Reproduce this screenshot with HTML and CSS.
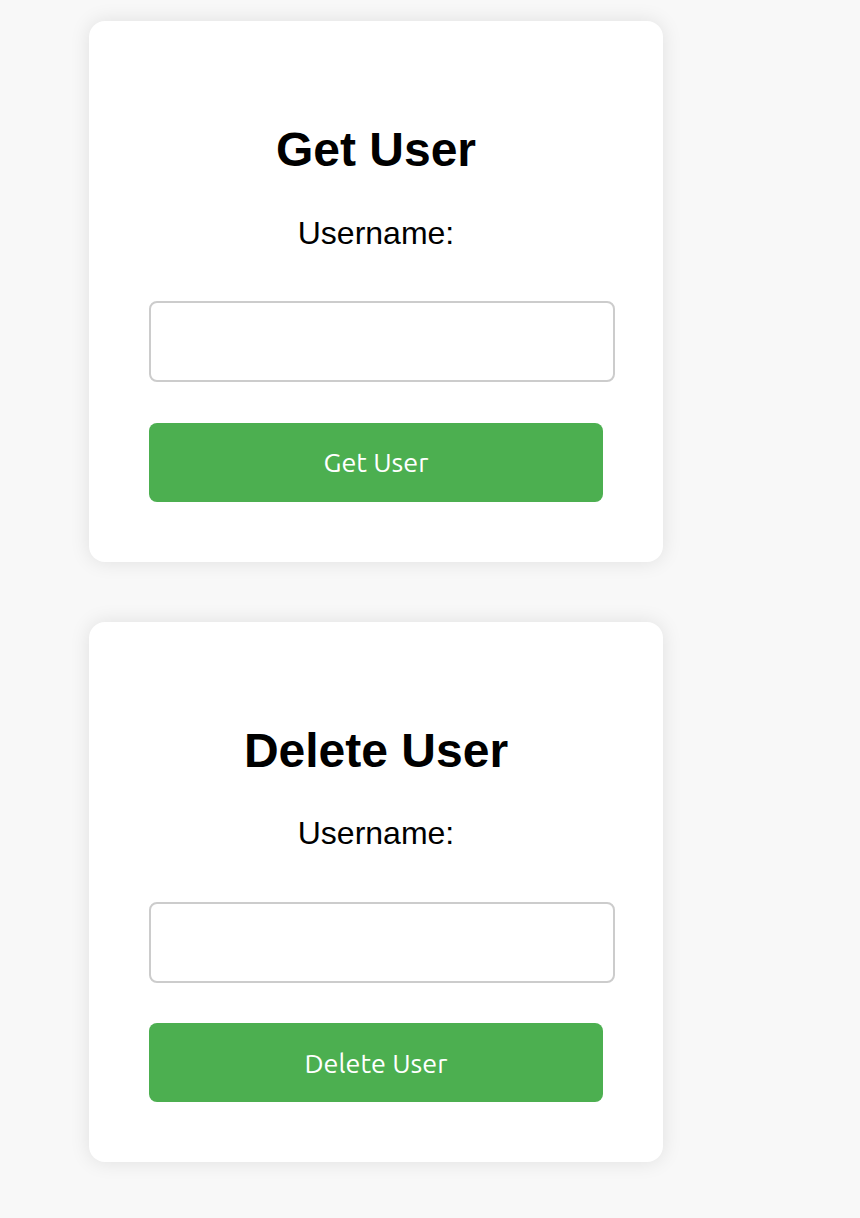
FILE: index.html
```html
<!DOCTYPE html>
<html lang="en">
<head>
<meta charset="utf-8">
<title>Users</title>
<link rel="stylesheet" href="styles.css">
</head>
<body>
<main class="page">
  <section class="card">
    <h1 class="card-title">Get User</h1>
    <label class="field-label" for="get-username">Username:</label>
    <input class="field-input" id="get-username" type="text">
    <button class="action-btn" type="button">Get User</button>
  </section>
  <section class="card">
    <h1 class="card-title">Delete User</h1>
    <label class="field-label" for="del-username">Username:</label>
    <input class="field-input" id="del-username" type="text">
    <button class="action-btn" type="button">Delete User</button>
  </section>
</main>
</body>
</html>
```
FILE: styles.css
```css
html, body {
  margin: 0;
  padding: 0;
  background: #f8f8f8;
}
body {
  font-family: "Liberation Sans", Arial, sans-serif;
  color: #000;
}
.page {
  display: flex;
  flex-direction: column;
  align-items: flex-start;
  gap: 60px;
  padding: 21px 0 40px 89px;
}
.card {
  width: 574px;
  box-sizing: border-box;
  padding: 60px;
  background: #fff;
  border-radius: 16px;
  box-shadow: 0 0 20px rgba(0, 0, 0, 0.1);
  display: flex;
  flex-direction: column;
  align-items: flex-start;
}
.card-title {
  align-self: stretch;
  text-align: center;
  font-size: 48px;
  font-weight: bold;
  margin: 41px 0 0;
  line-height: normal;
}
.field-label {
  align-self: stretch;
  text-align: center;
  font-size: 32px;
  line-height: normal;
  margin-top: 37.5px;
}
.field-input {
  box-sizing: border-box;
  width: calc(100% + 12px);
  height: 81px;
  margin-top: 49.5px;
  border: 2px solid #ccc;
  border-radius: 8px;
  padding: 0 10px;
  font-size: 24px;
  background: #fff;
  outline: none;
}
.action-btn {
  box-sizing: border-box;
  width: 100%;
  height: 79px;
  margin-top: 40.5px;
  border: 0;
  border-radius: 8px;
  background: #4caf50;
  color: #fff;
  font-family: "Ubuntu", "Open Sans", sans-serif;
  font-size: 27px;
  cursor: pointer;
}
```
